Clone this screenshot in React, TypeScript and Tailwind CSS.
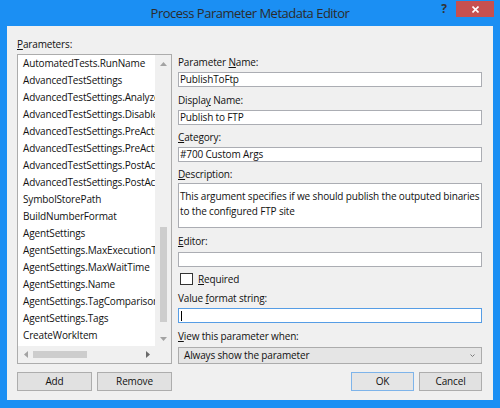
import React from "react";

const items = [
  "AutomatedTests.RunName",
  "AdvancedTestSettings",
  "AdvancedTestSettings.AnalyzeTestImpact",
  "AdvancedTestSettings.DisableTests",
  "AdvancedTestSettings.PreActionScriptArguments",
  "AdvancedTestSettings.PreActionScriptPath",
  "AdvancedTestSettings.PostActionScriptArguments",
  "AdvancedTestSettings.PostActionScriptPath",
  "SymbolStorePath",
  "BuildNumberFormat",
  "AgentSettings",
  "AgentSettings.MaxExecutionTime",
  "AgentSettings.MaxWaitTime",
  "AgentSettings.Name",
  "AgentSettings.TagComparisonOperator",
  "AgentSettings.Tags",
  "CreateWorkItem",
];

function Label({ children, className = "" }: { children: React.ReactNode; className?: string }) {
  return <div className={`h-[16px] leading-[16px] whitespace-nowrap ${className}`}>{children}</div>;
}

function U({ children }: { children: React.ReactNode }) {
  return <span className="underline underline-offset-[1px] decoration-[1px]">{children}</span>;
}

function Field({ children, className = "" }: { children?: React.ReactNode; className?: string }) {
  return (
    <div className={`h-[15px] border border-[#abadb3] bg-white pl-[1px] leading-[13px] whitespace-nowrap overflow-hidden ${className}`}>
      {children}
    </div>
  );
}

function TriUp() {
  return (
    <svg width="7" height="4" viewBox="0 0 7 4">
      <polygon points="0,4 3.5,0 7,4" fill="#a3a3a3" />
    </svg>
  );
}
function TriDown() {
  return (
    <svg width="7" height="4" viewBox="0 0 7 4">
      <polygon points="0,0 3.5,4 7,0" fill="#a3a3a3" />
    </svg>
  );
}
function TriLeft() {
  return (
    <svg width="4" height="7" viewBox="0 0 4 7">
      <polygon points="4,0 0,3.5 4,7" fill="#a3a3a3" />
    </svg>
  );
}
function TriRight() {
  return (
    <svg width="4" height="7" viewBox="0 0 4 7">
      <polygon points="0,0 4,3.5 0,7" fill="#6a6a6a" />
    </svg>
  );
}

export default function App() {
  return (
    <div className="w-[500px] h-[408px] bg-[#1b8ff3] flex flex-col [font-family:'Open_Sans',sans-serif] text-[10px] tracking-[-0.15px] text-[#111111]">
      {/* title bar */}
      <div className="h-[26px] flex shrink-0">
        <div className="w-[68px]" />
        <div className="flex-1 text-center text-[13px] tracking-[-0.5px] leading-[26px] text-[#2b2b2b]">
          Process Parameter Metadata Editor
        </div>
        <div className="w-[68px] flex items-start">
          <div className="w-[24px] h-[18px] flex items-center justify-center text-[12px] tracking-normal font-bold text-[#333] leading-none">?</div>
          <div className="w-[38px] h-[16px] mt-[1px] bg-[#c75050] flex items-center justify-center">
            <svg width="7" height="7" viewBox="0 0 7 7">
              <path d="M0.5 0.5 L6.5 6.5 M6.5 0.5 L0.5 6.5" stroke="#ffffff" strokeWidth="1.6" />
            </svg>
          </div>
        </div>
      </div>

      {/* client */}
      <div className="mx-[7px] h-[374px] bg-[#f0f0f0] flex pl-[10px] pr-[11px]">
        {/* left column */}
        <div className="w-[155px] flex flex-col">
          <Label className="mt-[10px]">
            <U>P</U>arameters:
          </Label>
          <div className="mt-[2px] h-[310px] border border-[#acacac] bg-white flex flex-col">
            <div className="flex flex-1 min-h-0">
              <div className="flex-1 min-w-0 overflow-hidden">
                {items.map((t) => (
                  <div key={t} className="h-[17px] leading-[17px] pl-[5px] whitespace-nowrap">
                    {t}
                  </div>
                ))}
              </div>
              <div className="w-[16px] bg-[#f0f0f0] flex flex-col items-center">
                <div className="h-[17px] flex items-center justify-center">
                  <TriUp />
                </div>
                <div className="mt-[155px] w-[7px] h-[95px] bg-[#cdcdcd]" />
                <div className="flex-1" />
                <div className="h-[17px] flex items-center justify-center pt-[3px]">
                  <TriDown />
                </div>
              </div>
            </div>
            <div className="h-[17px] flex shrink-0">
              <div className="flex-1 bg-[#f0f0f0] flex items-center">
                <div className="w-[15px] flex items-center justify-center">
                  <TriLeft />
                </div>
                <div className="w-[54px] h-[7px] bg-[#cdcdcd]" />
                <div className="flex-1" />
                <div className="w-[15px] flex items-center justify-center">
                  <TriRight />
                </div>
              </div>
              <div className="w-[16px] bg-[#f0f0f0]" />
            </div>
          </div>
          <div className="mt-[8px] flex gap-[5px]">
            <div className="w-[75px] h-[19px] border border-[#adadad] bg-[#e1e1e1] flex items-center justify-center">
              Add
            </div>
            <div className="w-[75px] h-[19px] border border-[#adadad] bg-[#e1e1e1] flex items-center justify-center">
              Remove
            </div>
          </div>
        </div>

        {/* right column */}
        <div className="ml-[6px] w-[304px] flex flex-col">
          <Label className="mt-[28px]">
            Parameter <U>N</U>ame:
          </Label>
          <Field className="mt-[2px]">PublishToFtp</Field>
          <Label className="mt-[5px]">
            Displa<U>y</U> Name:
          </Label>
          <Field className="mt-[2px]">Publish to FTP</Field>
          <Label className="mt-[4px]">
            <U>C</U>ategory:
          </Label>
          <Field className="mt-[2px]">#700 Custom Args</Field>
          <Label className="mt-[4px]">
            <U>D</U>escription:
          </Label>
          <div className="mt-[1px] h-[45px] border border-[#abadb3] bg-white pl-[1px] pt-[5px] leading-[15px] whitespace-nowrap overflow-hidden">
            This argument specifies if we should publish the outputed binaries
            <br />
            to the configured FTP site
          </div>
          <Label className="mt-[5px]">
            <U>E</U>ditor:
          </Label>
          <Field className="mt-[3px]" />
          <div className="mt-[4px] h-[16px] flex items-center">
            <div className="w-[13px] h-[12px] border border-[#333333] bg-white ml-[2px]" />
            <div className="ml-[5px] leading-[16px]">
              <U>R</U>equired
            </div>
          </div>
          <Label className="mt-[3px]">
            Value <U>f</U>ormat string:
          </Label>
          <div className="mt-[2px] h-[15px] border border-[#569de5] bg-white flex items-center pl-[2px]">
            <div className="w-[1px] h-[10px] bg-black" />
          </div>
          <Label className="mt-[5px]">
            <U>V</U>iew this parameter when:
          </Label>
          <div className="mt-[3px] h-[17px] border border-[#acacac] bg-[#e5e5e5] flex items-center pl-[5px] pr-[6px]">
            <div className="flex-1 leading-[15px]">Always show the parameter</div>
            <svg width="5" height="3" viewBox="0 0 5 3">
              <path d="M0.5 0.5 L2.5 2.5 L4.5 0.5" stroke="#7a7a7a" strokeWidth="1" fill="none" />
            </svg>
          </div>
          <div className="mt-[8px] flex justify-end gap-[5px]">
            <div className="w-[63px] h-[19px] border border-[#7eb4ea] bg-[#e5e5e5] flex items-center justify-center">
              OK
            </div>
            <div className="w-[63px] h-[19px] border border-[#adadad] bg-[#e1e1e1] flex items-center justify-center">
              Cancel
            </div>
          </div>
        </div>
      </div>
    </div>
  );
}
